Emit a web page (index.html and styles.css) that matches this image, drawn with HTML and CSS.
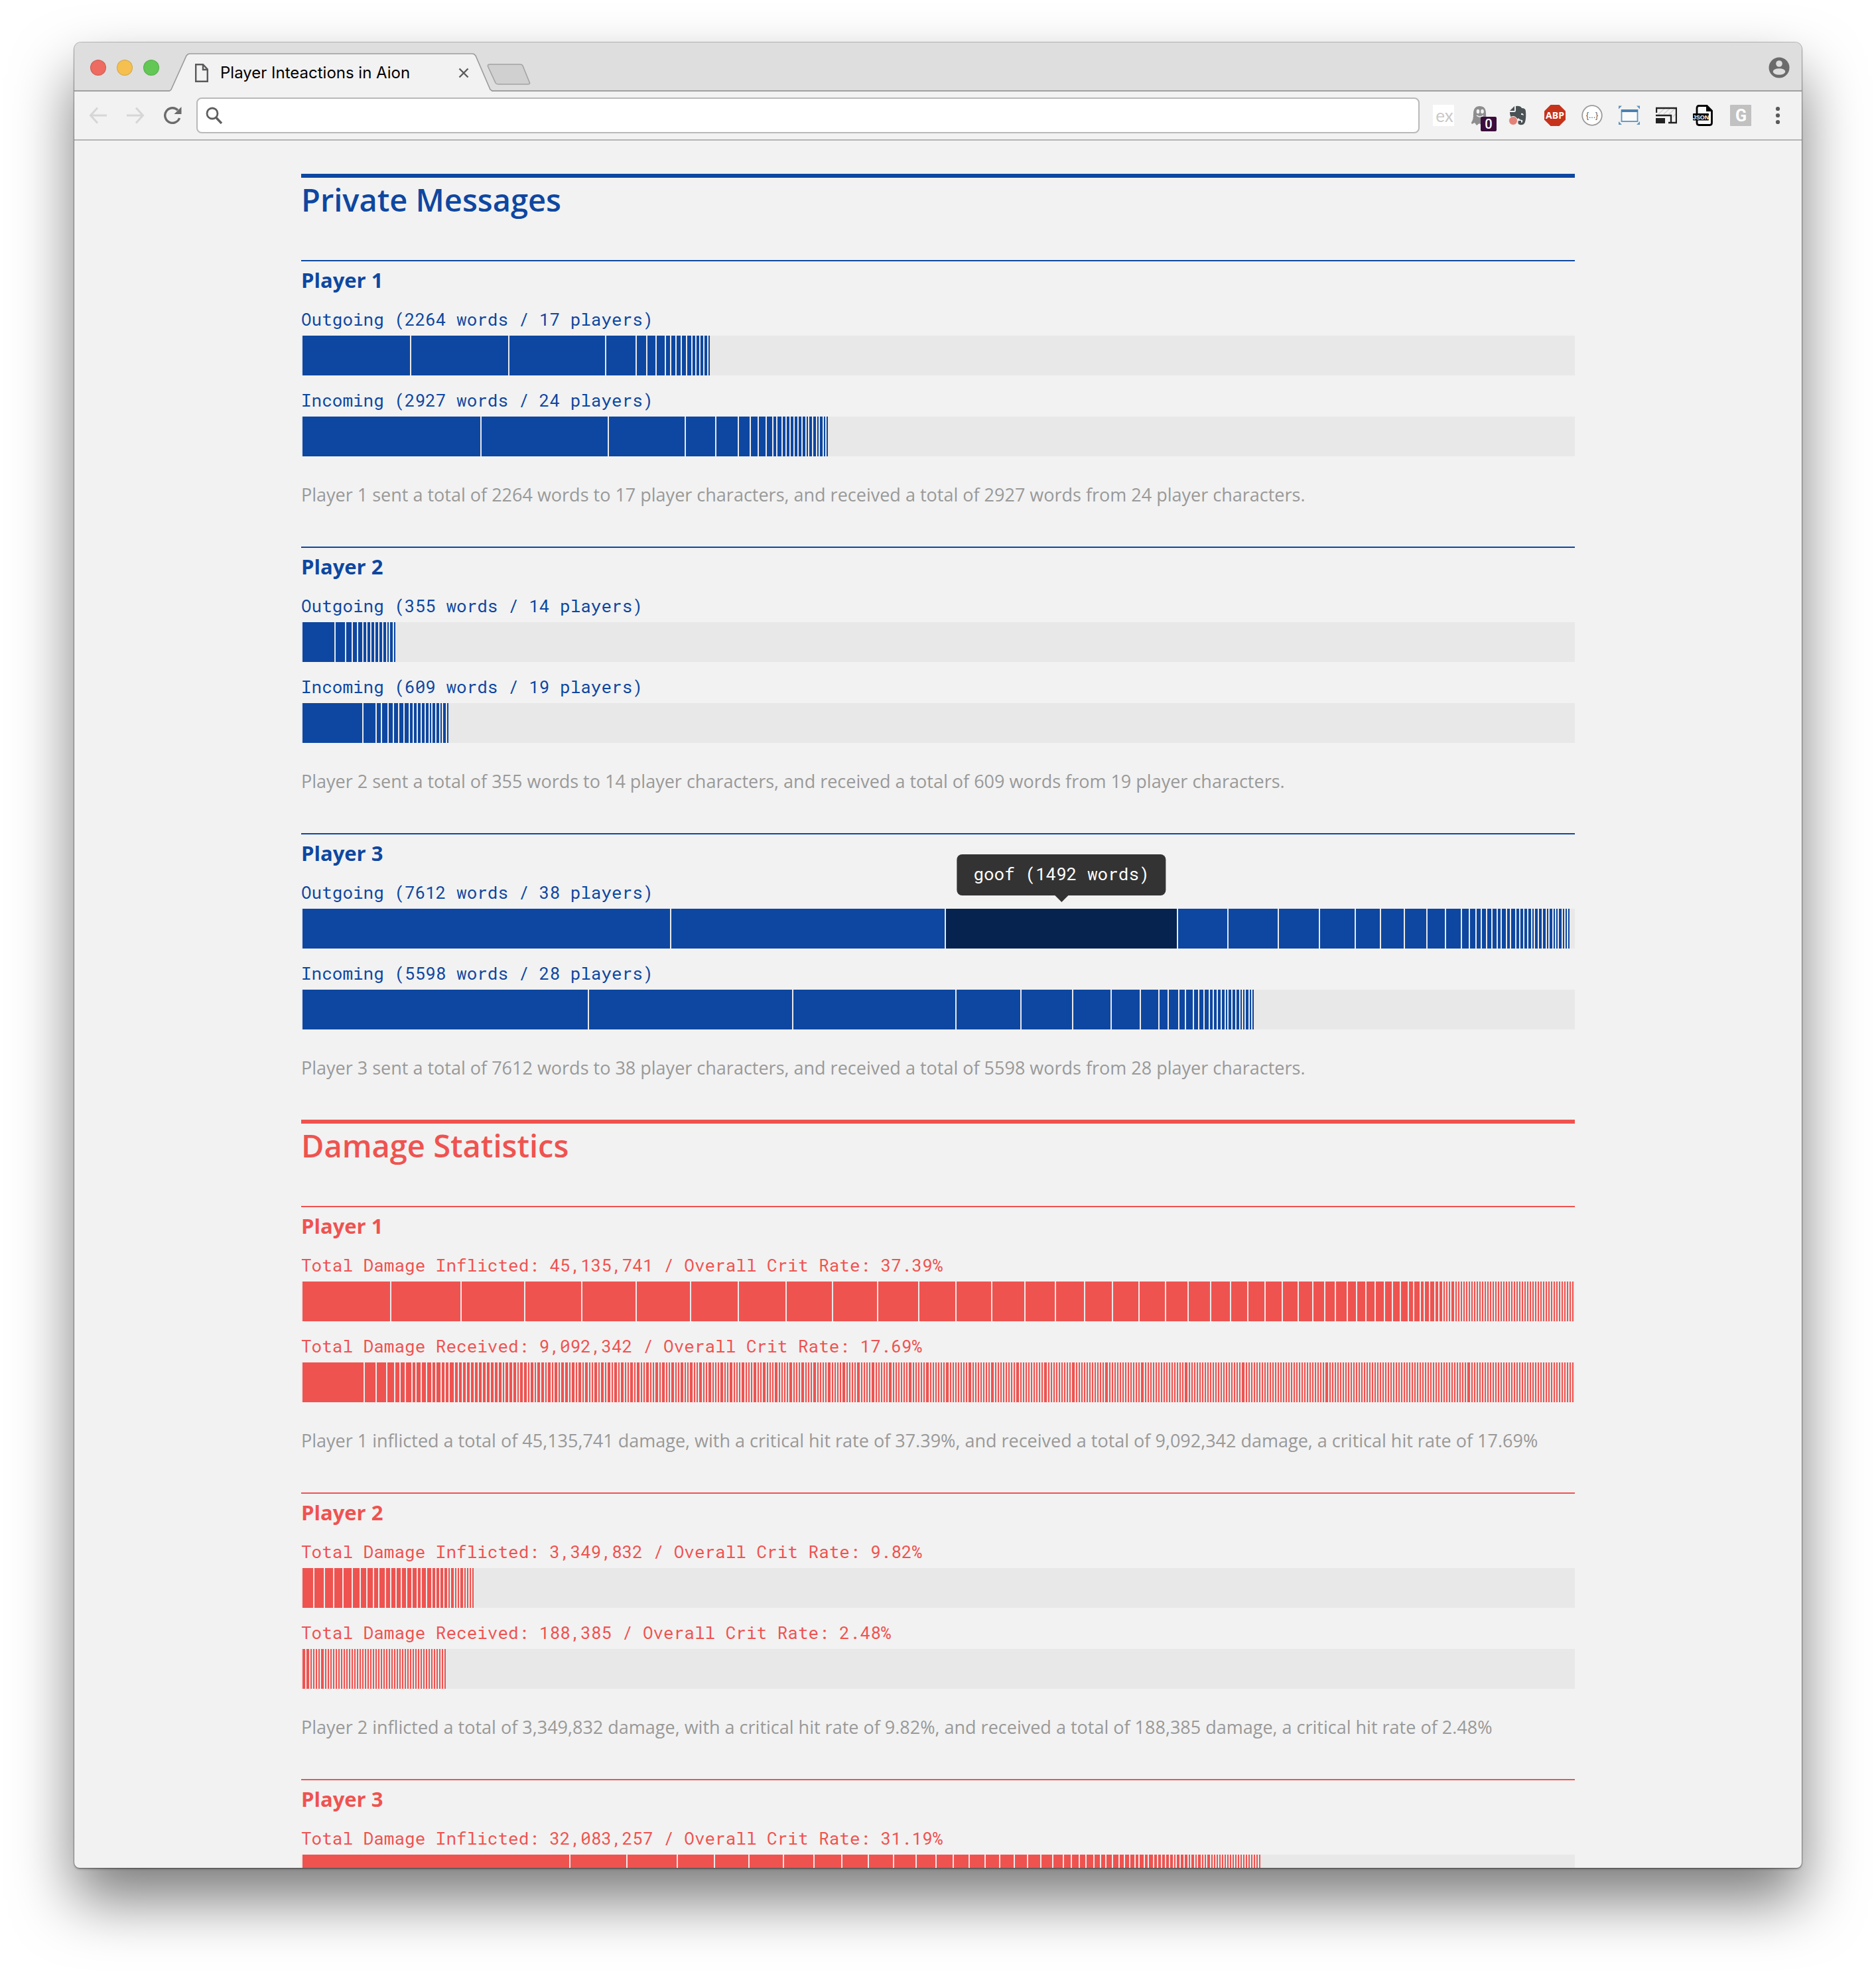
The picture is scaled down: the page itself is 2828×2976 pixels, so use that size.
FILE: index.html
```html
<!DOCTYPE html>
<html lang="en">
<head>
<meta charset="utf-8">
<title>Player Inteactions in Aion</title>
<link rel="stylesheet" href="styles.css">
</head>
<body>
<div class="window">
  <header class="tabstrip">
    <div class="lights">
      <button class="light light-close" aria-label="Close"></button>
      <button class="light light-min" aria-label="Minimize"></button>
      <button class="light light-max" aria-label="Zoom"></button>
    </div>
    <div class="tab">
      <svg class="tab-shape" viewBox="0 0 486 58" aria-hidden="true"><path d="M0 57 L3 54 L25 5 Q27 1 31 1 H455 Q459 1 461 5 L482 54 L485 57 V58 H0Z" fill="#f2f2f2"/><path d="M0 57 L2 55 L25 4 Q27 1 30 1 H456 Q459 1 461 4 L483 55 L486 57" fill="none" stroke="#9b9b9b" stroke-width="1.6"/></svg>
      <div class="tab-body">
        <svg class="doc" viewBox="0 0 20 28" aria-hidden="true"><path d="M1.2 1.2H12L18.8 8.5V26.8H1.2Z M12 1.2V9H18.8" fill="none" stroke="#5a5a5a" stroke-width="2.4"/></svg>
        <span class="tab-title">Player Inteactions in Aion</span>
        <button class="icon-btn tab-close" aria-label="Close tab"><svg viewBox="0 0 16 16"><path d="M1.5 1.5L14.5 14.5M14.5 1.5L1.5 14.5" stroke="#5a5a5a" stroke-width="2.4"/></svg></button>
      </div>
    </div>
    <button class="icon-btn new-tab" aria-label="New tab"><svg viewBox="0 0 66 32"><path d="M4 1H50Q53 1 54 3L64.500 29Q65 31 62 31H17Q14 31 13 29L1.500 4Q1 1 4 1Z" fill="#d0d0d0" stroke="#a3a3a3" stroke-width="1.6"/></svg></button>
    <button class="icon-btn profile" aria-label="Profile"><svg viewBox="0 0 32 32"><circle cx="16" cy="16" r="15.500" fill="#6b6b6b"/><circle cx="16" cy="10" r="4.800" fill="#dedede"/><ellipse cx="16" cy="22" rx="9.300" ry="4.800" fill="#dedede"/></svg></button>
  </header>

  <div class="toolbar">
    <nav class="nav">
      <button class="icon-btn" aria-label="Back"><svg viewBox="0 0 28 28"><path d="M27 14H3M13 2.500L2.500 14L13 25.500" fill="none" stroke="#d6d6d6" stroke-width="3"/></svg></button>
      <button class="icon-btn" aria-label="Forward"><svg viewBox="0 0 28 28"><path d="M1 14H25M15 2.500L25.500 14L15 25.500" fill="none" stroke="#d6d6d6" stroke-width="3"/></svg></button>
      <button class="icon-btn" aria-label="Reload"><svg viewBox="0 0 28 28"><path d="M24.600 18A11.300 11.300 0 1 1 22 6" fill="none" stroke="#6b6b6b" stroke-width="3.400"/><path d="M27.500 1V12H16.500Z" fill="#6b6b6b"/></svg></button>
    </nav>
    <label class="omnibox">
      <svg viewBox="0 0 26 26" aria-hidden="true"><circle cx="10" cy="10" r="8" fill="none" stroke="#5f5f5f" stroke-width="2.800"/><path d="M15.500 16L24 25" stroke="#5f5f5f" stroke-width="3.400"/></svg>
      <input type="text" aria-label="Address and search">
    </label>
    <div class="extensions">
      <button class="icon-btn ext-ex" aria-label="ex">ex</button>
      <button class="icon-btn" aria-label="Ghostery"><svg viewBox="0 0 32 32"><path d="M3 29Q1 27 3 25Q5 22 5 14Q5 2 14.500 2Q24 2 24 13Q24 22 27 25V30L22 28L18 31L14 28L10 31L7 27Z" fill="#8e8e8e"/><ellipse cx="12" cy="10" rx="2.300" ry="3.300" fill="#f2f2f2"/><ellipse cx="18.500" cy="10" rx="2.300" ry="3.300" fill="#f2f2f2"/><path d="M10 16Q15 20 20 16" stroke="#f2f2f2" stroke-width="1.500" fill="none"/></svg><span class="count">0</span></button>
      <button class="icon-btn" aria-label="Evernote"><svg viewBox="0 0 32 32"><path d="M4 9L11 2V9Z" fill="#4a5255"/><path d="M4 11H11Q13 11 13 8V2Q20 1 22 5Q28 5 28 10Q29 22 26 28Q24 31 19 30Q15 29 17 24H21V27Q24 27 23 23Q19 23 17 20Q14 24 8 21Q4 18 4 11Z" fill="#4a5255"/><path d="M21 13Q24 12 25 16Q23 15 21 15Z" fill="#f2f2f2"/><circle cx="9" cy="24" r="6.500" fill="#e38278" stroke="#f2f2f2"/></svg></button>
      <button class="icon-btn" aria-label="Adblock Plus"><svg viewBox="0 0 32 32"><path d="M9.500 0H22.500L32 9.500V22.500L22.500 32H9.500L0 22.500V9.500Z" fill="#c7321b"/><text x="16" y="21" class="t-abp">ABP</text></svg></button>
      <button class="icon-btn" aria-label="JSON view"><svg viewBox="0 0 32 32"><circle cx="16" cy="16" r="14.800" fill="#fff" stroke="#9a9a9a" stroke-width="1.800"/><text x="16" y="20" class="t-braces">{...}</text></svg></button>
      <button class="icon-btn" aria-label="Window capture"><svg viewBox="0 0 32 32"><path d="M0 1.500H5L0 6.500ZM32 1.500H27L32 6.500ZM0 30H5L0 25ZM32 30H27L32 25Z" fill="#5b93c2"/><rect x="4.500" y="8" width="24" height="17" fill="#fafafa" stroke="#5b93c2" stroke-width="1.800"/><path d="M4 7H29V11H4Z" fill="#4b80ad"/></svg></button>
      <button class="icon-btn" aria-label="Window resizer"><svg viewBox="0 0 32 32"><path d="M4 14L14 5M12 14L22 5M20 14L30 5M26 18L31 13" stroke="#d2d2d2" stroke-width="1.500"/><path d="M1 12V5H31V27H19" fill="none" stroke="#222" stroke-width="2.400"/><path d="M0 16H23V27" fill="none" stroke="#222" stroke-width="2.400"/><rect y="20" width="14" height="8" fill="#222"/></svg></button>
      <button class="icon-btn" aria-label="JSON"><svg viewBox="0 0 32 32"><path d="M6 13V5Q6 1.500 9 1.500H21L28.500 9V27Q28.500 30.500 25.500 30.500H9Q6 30.500 6 27V23" fill="#f8f8f8" stroke="#000" stroke-width="2.800"/><path d="M20 1V10H29Z" fill="#000"/><rect y="13" width="24" height="10.500" rx="1" fill="#000"/><text x="12" y="21.500" class="t-json">JSON</text></svg></button>
      <button class="icon-btn" aria-label="G"><svg viewBox="0 0 32 32"><rect width="32" height="32" rx="1" fill="#c1c1c1"/><text x="16.500" y="25" class="t-g">G</text></svg></button>
      <button class="icon-btn" aria-label="Menu"><svg viewBox="0 0 32 32"><g fill="#5a5a5a"><circle cx="16" cy="6" r="3.100"/><circle cx="16" cy="16" r="3.100"/><circle cx="16" cy="26" r="3.100"/></g></svg></button>
    </div>
  </div>

  <main class="page">
    <section class="topic topic-messages">
      <h1>Private Messages</h1>
      <article class="player">
        <h2>Player 1</h2>
        <div class="stat"><p class="label">Outgoing (2264 words / 17 players)</p>
          <div class="bar" data-cells="164 148 146 46 16 14 14 8*5 6*4 4"></div></div>
        <div class="stat"><p class="label">Incoming (2927 words / 24 players)</p>
          <div class="bar" data-cells="270 192 116 46 34 18 12 12 10 6 8 6*6 4 6 6 4 6 4 4"></div></div>
        <p class="summary">Player 1 sent a total of 2264 words to 17 player characters, and received a total of 2927 words from 24 player characters.</p>
      </article>
      <article class="player">
        <h2>Player 2</h2>
        <div class="stat"><p class="label">Outgoing (355 words / 14 players)</p>
          <div class="bar" data-cells="50 16 10 8 8 6*6 4 6 4"></div></div>
        <div class="stat"><p class="label">Incoming (609 words / 19 players)</p>
          <div class="bar" data-cells="92 20 8 10 8*4 6*5 4 6 6 4 6 4"></div></div>
        <p class="summary">Player 2 sent a total of 355 words to 14 player characters, and received a total of 609 words from 19 player characters.</p>
      </article>
      <article class="player">
        <h2>Player 3</h2>
        <div class="stat"><p class="label">Outgoing (7612 words / 38 players)</p>
          <div class="bar" data-cells="556 414 350 76 76 62 54 38 36 34 28 24 12 10 8*4 6 8 6 8 6*4 4 6 6 6 4 6 4 4 6 4 4 4" data-active="2" data-tip="goof (1492 words)"></div></div>
        <div class="stat"><p class="label">Incoming (5598 words / 28 players)</p>
          <div class="bar" data-cells="432 308 246 98 78 58 44 28 14 16 10 12 8 8 8 6*4 4 6 6 6 4 4 6 4 4"></div></div>
        <p class="summary">Player 3 sent a total of 7612 words to 38 player characters, and received a total of 5598 words from 28 player characters.</p>
      </article>
    </section>

    <section class="topic topic-damage">
      <h1>Damage Statistics</h1>
      <article class="player">
        <h2>Player 1</h2>
        <div class="stat"><p class="label">Total Damage Inflicted: 45,135,741 / Overall Crit Rate: 37.39%</p>
          <div class="bar" data-cells="134 106 96 86 82 82 72 72 70 68 62 56 54 50 46 44 42 40 40 34 34 30 26 26 26 24 22 18 16 18 14 14 14 14 12 12 12 8 10 6 8 8 6 6 4 4 4 6 4*45"></div></div>
        <div class="stat"><p class="label">Total Damage Received: 9,092,342 / Overall Crit Rate: 17.69%</p>
          <div class="bar" data-cells="94 18 16 12 8 8 10 6 8 8 8 6 8 6 6 8 6*12 4 6 6 6 4 6 6 4 6 4 6 6 4 6 4 6 4 6 6 4 6 4 6 4 6 4 4 6 4 6 4 6 4 6 4 6 4 4 6 4 6 4 4 6 4 4 6 4 6 4 4 6 4 4 6 4 4 6 4 4 6 4*2 6 4*3 6 4*2 6 4*3 6 4*3 6 4*2 6 4*3 6 4*4 6 4*3 6 4*3 6 4*4 6 4*4 6 4*4 6 4*4 6 4*5 6 4*6 6 4*5 6 4*6 6 4*7 6 4*7 6 4*8 6 4*9 6 4*9 6 4*11 6 4*12 6 4*15 6 4*20 6 4*30 6 4*52 6 4*39"></div></div>
        <p class="summary">Player 1 inflicted a total of 45,135,741 damage, with a critical hit rate of 37.39%, and received a total of 9,092,342 damage, a critical hit rate of 17.69%</p>
      </article>
      <article class="player">
        <h2>Player 2</h2>
        <div class="stat"><p class="label">Total Damage Inflicted: 3,349,832 / Overall Crit Rate: 9.82%</p>
          <div class="bar" data-cells="18 16 14 14 14 12 10 10 8 10 8*6 6 8 8 6*4 4 6 4 4 6 4*4"></div></div>
        <div class="stat"><p class="label">Total Damage Received: 188,385 / Overall Crit Rate: 2.48%</p>
          <div class="bar" data-cells="6 6 4*4 6 4*46"></div></div>
        <p class="summary">Player 2 inflicted a total of 3,349,832 damage, with a critical hit rate of 9.82%, and received a total of 188,385 damage, a critical hit rate of 2.48%</p>
      </article>
      <article class="player">
        <h2>Player 3</h2>
        <div class="stat"><p class="label">Total Damage Inflicted: 32,083,257 / Overall Crit Rate: 31.19%</p>
          <div class="bar" data-cells="404 86 76 56 52 52 46 42 40 38 34 30 26 24 24 22 22 20 20 18 16 12 12 10 12 10 8 10 10 8 8 8 6 8 6 8 6*5 4 6 6 6 4 6 4 6 4 4 6 4*19"></div></div>
      </article>
    </section>
  </main>
</div>
<script src="bars.js"></script>
</body>
</html>
```

FILE: styles.css
```css
* { box-sizing: border-box; }

body {
  margin: 0;
  height: 100vh;
  padding: 64px 112px 160px;
  display: flex;
  background: #fff;
  font-family: "Open Sans", sans-serif;
}

h1, h2, p { margin: 0; }

button { border: 0; padding: 0; background: none; font: inherit; }
svg { display: block; }

/* Browser window */
.window {
  flex: 1;
  min-width: 0;
  display: flex;
  flex-direction: column;
  overflow: hidden;
  border-radius: 10px 10px 8px 8px;
  background: #f2f2f2;
  box-shadow: 0 0 0 1px rgba(0, 0, 0, 0.25), 0 2px 3px rgba(0, 0, 0, 0.3), 0 48px 90px rgba(0, 0, 0, 0.52);
}

.tabstrip {
  flex: none;
  display: flex;
  align-items: center;
  height: 74px;
  padding: 4px 18px 0 24px;
  border-bottom: 2px solid #a0a0a0;
  background: #dedede;
}

.lights { display: flex; gap: 16px; }
.light { width: 24px; height: 24px; border-radius: 50%; border: 1px solid rgba(0, 0, 0, 0.14); }
.light-close { background: #ed6b60; }
.light-min { background: #f5c04f; }
.light-max { background: #62c755; }

.tab {
  display: grid;
  align-self: flex-end;
  width: 486px;
  height: 58px;
  margin: 0 0 -2px 16px;
}
.tab > * { grid-area: 1 / 1; }
.tab-shape { width: 486px; height: 58px; }
.tab-body { display: flex; align-items: center; padding: 2px 35px 0 38px; z-index: 1; }
.doc { width: 20px; height: 28px; }
.tab-title {
  flex: 1;
  margin-left: 18px;
  color: #000;
  font: 24px/32px Inter, sans-serif;
  white-space: nowrap;
}
.tab-close { width: 16px; height: 16px; }
.new-tab { width: 66px; height: 32px; margin-left: -8px; margin-top: 16px; }
.tabstrip .new-tab { margin-top: 20px; margin-bottom: 0; }
.profile { width: 32px; height: 32px; margin-left: auto; }

.toolbar {
  flex: none;
  display: flex;
  align-items: center;
  height: 74px;
  padding: 0 20px 0 22px;
  border-bottom: 2px solid #b4b4b4;
  background: #f2f2f2;
}
.nav { display: flex; gap: 28px; margin-right: 22px; }
.nav .icon-btn { width: 28px; height: 28px; }
.omnibox {
  flex: 1;
  display: flex;
  align-items: center;
  gap: 12px;
  height: 54px;
  padding: 0 12px;
  border: 2px solid #b9b9b9;
  border-radius: 8px;
  background: #fff;
}
.omnibox svg { width: 26px; height: 26px; }
.omnibox input { flex: 1; border: 0; outline: 0; background: none; font: 26px/32px Inter, sans-serif; }

.extensions { display: flex; gap: 24px; margin-left: 20px; }
.extensions .icon-btn { position: relative; width: 32px; height: 32px; }
.extensions .ext-ex { padding-left: 3px; background: #fff; color: #c9c9c9; font: 26px/28px Lato, sans-serif; }
.count {
  position: absolute;
  left: 16px;
  top: 18px;
  width: 24px;
  height: 22px;
  border-radius: 2px;
  background: #3b0d3d;
  color: #fff;
  font: 500 20px/22px Roboto, sans-serif;
  text-align: center;
}
.t-abp { font: bold 14px "Open Sans", sans-serif; fill: #fff; text-anchor: middle; }
.t-braces { font: 12px "Liberation Sans", sans-serif; fill: #555; text-anchor: middle; }
.t-json { font: bold 9px "Liberation Sans", sans-serif; fill: #fff; text-anchor: middle; }
.t-g { font: bold 25px Roboto, sans-serif; fill: #fff; text-anchor: middle; }

/* Page */
.page { flex: 1; min-height: 0; overflow: hidden; padding: 50px 32px 0; }
.topic { max-width: 1920px; margin: 0 auto; color: var(--tone); }
.topic-messages { --tone: #0d47a1; --tone-active: #06234f; }
.topic-damage { --tone: #ef5350; --tone-active: #a02320; }

.topic h1 {
  margin-bottom: 58px;
  border-top: 6px solid var(--tone);
  font-size: 47px;
  font-weight: 600;
  line-height: 66px;
}
.player { border-top: 2px solid var(--tone); padding-bottom: 58px; }
.player h2 { margin-bottom: 10px; font-size: 31px; font-weight: 700; line-height: 56px; }
.stat + .stat { margin-top: 16px; }
.label { margin-bottom: 4px; font: 26px/42px "Roboto Mono", "DejaVu Sans Mono", monospace; white-space: nowrap; }
.summary { margin-top: 38px; color: #999; font-size: 27px; line-height: 40px; }

.bar { display: flex; height: 60px; background: #e8e8e8; }
.cell { min-width: 0; background: var(--tone); box-shadow: inset 2px 0 #e8e8e8; }
.cell-active { position: relative; background: var(--tone-active); }

.tip {
  position: absolute;
  left: calc(50% + 1px);
  bottom: 80px;
  transform: translateX(-50%);
  padding: 8px 25px 12px;
  border-radius: 8px;
  background: #333;
  color: #fff;
  font: 26px/42px "Roboto Mono", "DejaVu Sans Mono", monospace;
  white-space: nowrap;
}
.tip::after {
  content: "";
  position: absolute;
  left: 50%;
  top: 100%;
  margin-left: -10px;
  border: 10px solid transparent;
  border-top-color: #333;
  border-bottom: 0;
}
```

FILE: bars.js
```js
// Each bar is a row of cells; a full track is 1920 units. "4*45" means 45 cells of 4 units.
const TRACK = 1920;

document.querySelectorAll('.bar').forEach((bar) => {
  const cells = bar.dataset.cells.split(' ').flatMap((token) => {
    const [size, times = 1] = token.split('*').map(Number);
    return Array(times).fill(size);
  });
  let used = 0;
  cells.forEach((size, index) => {
    const cell = document.createElement('div');
    cell.className = 'cell';
    cell.style.flex = `${size} 1 0`;
    used += size;
    if (String(index) === bar.dataset.active) {
      cell.classList.add('cell-active');
      const tip = document.createElement('div');
      tip.className = 'tip';
      tip.textContent = bar.dataset.tip;
      cell.append(tip);
    }
    bar.append(cell);
  });
  const rest = document.createElement('div');
  rest.style.flex = `${TRACK - used} 1 0`;
  bar.append(rest);
});
```
